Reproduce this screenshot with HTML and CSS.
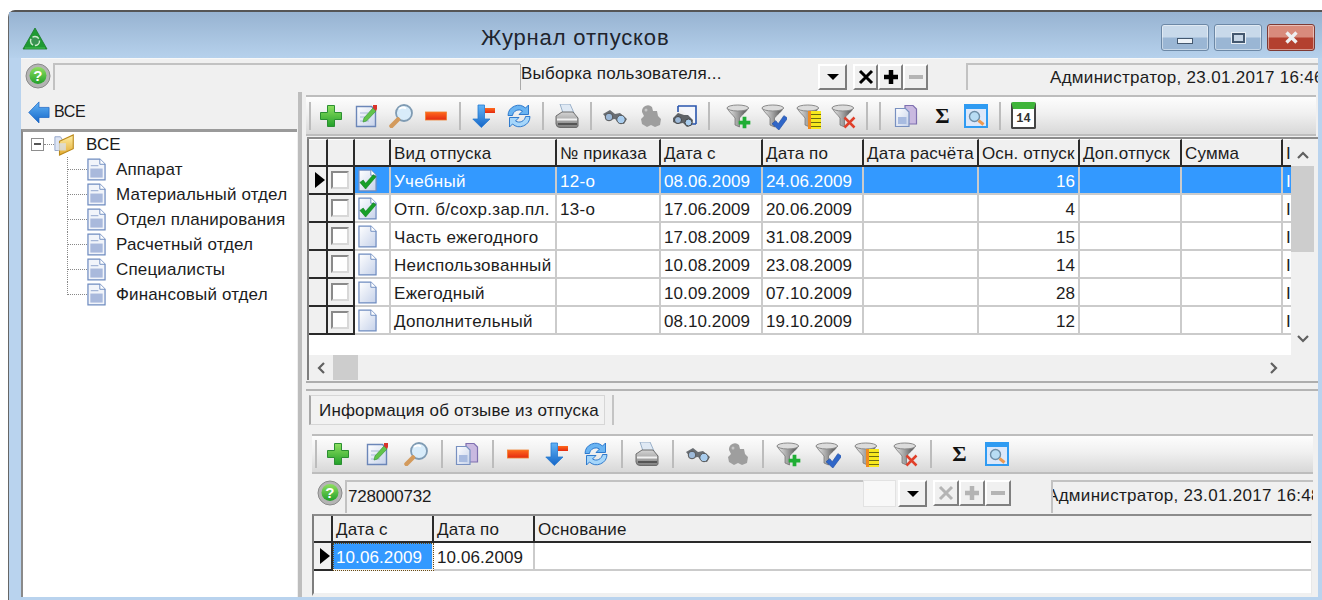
FILE: index.html
```html
<!DOCTYPE html>
<html lang="ru">
<head>
<meta charset="utf-8">
<title>Журнал отпусков</title>
<link rel="stylesheet" href="styles.css">
</head>
<body>
<svg class="sprite" width="0" height="0" aria-hidden="true">
  <defs>
    <linearGradient id="gGreen" x1="0" y1="0" x2="0" y2="1"><stop offset="0" stop-color="#8fe060"/><stop offset="1" stop-color="#22a02a"/></linearGradient>
    <linearGradient id="gRed" x1="0" y1="0" x2="0" y2="1"><stop offset="0" stop-color="#ff6a1c"/><stop offset="1" stop-color="#e32a10"/></linearGradient>
    <linearGradient id="gBlue" x1="0" y1="0" x2="0" y2="1"><stop offset="0" stop-color="#62b4f6"/><stop offset="1" stop-color="#1566c8"/></linearGradient>
    <linearGradient id="gDoc" x1="0" y1="0" x2="1" y2="1"><stop offset="0" stop-color="#ffffff"/><stop offset="1" stop-color="#c6d2ea"/></linearGradient>
    <linearGradient id="gFunnel" x1="0" y1="0" x2="1" y2="0"><stop offset="0" stop-color="#ececec"/><stop offset=".5" stop-color="#a0a0a0"/><stop offset="1" stop-color="#484848"/></linearGradient>
    <linearGradient id="gFolder" x1="0" y1="0" x2="0" y2="1"><stop offset="0" stop-color="#fff0a8"/><stop offset="1" stop-color="#e3aa30"/></linearGradient>
    <linearGradient id="gPrint" x1="0" y1="0" x2="0" y2="1"><stop offset="0" stop-color="#d6d6d6"/><stop offset="1" stop-color="#7e7e7e"/></linearGradient>

    <symbol id="i-plus" viewBox="0 0 24 24"><path d="M8.500 1.500h7v7h7v7h-7v7h-7v-7h-7v-7h7z" fill="url(#gGreen)" stroke="#2b8f32"/></symbol>
    <symbol id="i-edit" viewBox="0 0 24 24"><path d="M2.500 2.500h15l4 4v16h-19z" fill="url(#gDoc)" stroke="#6b86b8" stroke-width="1.400"/><path d="M6 9h8M6 13h5M6 17h9" stroke="#a9b9d8"/><path d="M9 18l1-4L19 4l3 3-9.500 10z" fill="#62c44a" stroke="#3b9a3a" stroke-width=".7"/><path d="M19 1h4v4l-1 2-3-3z" fill="#d9342a"/></symbol>
    <symbol id="i-find" viewBox="0 0 24 24"><circle cx="15" cy="9" r="8" fill="#d8ecfa" stroke="#7f9bb3" stroke-width="1.800"/><path d="M10 5a6 6 0 0 1 7-.5" stroke="#fff" stroke-width="2" fill="none"/><path d="M9 15.500L2.500 22" stroke="#d39a5c" stroke-width="4.500" stroke-linecap="round"/></symbol>
    <symbol id="i-minus" viewBox="0 0 24 24"><rect x="1.500" y="8" width="21" height="8" fill="url(#gRed)" stroke="#f08030" stroke-width=".8"/></symbol>
    <symbol id="i-down" viewBox="0 0 24 24"><path d="M6 1h6.500v14H18l-8.700 8.500L.8 15H6z" fill="url(#gBlue)" stroke="#2478d0" stroke-width=".8"/><rect x="13" y="4" width="10" height="5" fill="url(#gRed)"/></symbol>
    <symbol id="i-refresh" viewBox="0 0 24 24"><path d="M1 11.500A10.500 10.500 0 0 1 18.500 4l3-3v9.500H12l3.500-3.500a6.500 6.500 0 0 0-10 4.500z" fill="#6ab4f2" stroke="#1f6fc8" stroke-width=".9"/><path d="M23 12.500A10.500 10.500 0 0 1 5.500 20l-3 3v-9.500H12l-3.500 3.500a6.500 6.500 0 0 0 10-4.500z" fill="#a6d6fa" stroke="#1f6fc8" stroke-width=".9"/></symbol>
    <symbol id="i-print" viewBox="0 0 24 24"><path d="M5 0h10l4 9H8z" fill="#dfe9f4" stroke="#9ab0c8"/><path d="M1 12l6-4h11l5 6v7a2 2 0 0 1-2 2.500H5a4 4 0 0 1-4-3.500z" fill="url(#gPrint)" stroke="#6c6c6c"/><path d="M2 15.500h20" stroke="#f1f1f1" stroke-width="2"/><path d="M3 20h19" stroke="#4e4e4e" stroke-width="1.800"/></symbol>
    <symbol id="i-binoc" viewBox="0 0 24 24"><path d="M0 10l7-4 5 4 5-1 7 6-3 5-5-1-4-4-7 1z" fill="#6a6e73"/><circle cx="6" cy="13" r="3.800" fill="#9db9d8" stroke="#555"/><circle cx="18" cy="15.500" r="4.200" fill="#a9cdee" stroke="#555"/></symbol>
    <symbol id="i-puzzle" viewBox="0 0 24 24"><path d="M4 8a6 6 0 0 1 10-5l1 4h4l1 5 3 3-1 6-5 2-4-2-4 2-5-3-1-5 3-3z" fill="#9e9e9e"/><circle cx="8" cy="6" r="1.500" fill="#c6c6c6"/></symbol>
    <symbol id="i-binframe" viewBox="0 0 24 24"><path d="M5 2h18v18" fill="#f4f6fb" stroke="#2a55ad" stroke-width="1.600"/><path d="M5 2v6M23 20h-7" stroke="#2a55ad" stroke-width="1.600"/><path d="M0 14l5-5 6 2 4 0 5 5-1 5-5 2-4-4-6 1-4-2z" fill="#5f6367"/><circle cx="5" cy="16" r="3.500" fill="#9db9d8" stroke="#444"/><circle cx="15.500" cy="18.500" r="3.500" fill="#a9cdee" stroke="#444"/></symbol>
    <symbol id="i-funnel" viewBox="0 0 24 24"><path d="M1 4c2 4 6 7 8 10v7l4.500 2V14c2-3 7-6 9-10z" fill="url(#gFunnel)" stroke="#6c6c6c" stroke-width=".7"/><ellipse cx="11.800" cy="4" rx="10.800" ry="3" fill="#dcdcdc" stroke="#8a8a8a"/></symbol>
    <symbol id="i-copy" viewBox="0 0 24 24"><path d="M11 1.500h8l3.500 3.500v15H11z" fill="#c9b9e0" stroke="#7f70b0" stroke-width="1.200"/><path d="M1.500 4.500h10l3.500 3.500v14.500H1.500z" fill="url(#gDoc)" stroke="#7890c0" stroke-width="1.200"/><rect x="4" y="13" width="8.500" height="7" fill="#a8bbe0"/></symbol>
    <symbol id="i-view" viewBox="0 0 24 24"><rect x="1" y="1" width="22" height="22" fill="#dce8fa" stroke="#2f9bf2" stroke-width="2"/><rect x="1" y="1" width="22" height="4" fill="#2f9bf2"/><circle cx="10.500" cy="12.500" r="5" fill="#b8dcf4" stroke="#6e8ea8" stroke-width="1.400"/><path d="M14.500 16.500l5 4" stroke="#ee9a50" stroke-width="3"/></symbol>
    <symbol id="i-doc" viewBox="0 0 20 24"><path d="M1 1h12.500L19 6.500V23H1z" fill="url(#gDoc)" stroke="#6f8cc0" stroke-width="1.300"/><path d="M13.500 1v5.500H19" fill="#fff" stroke="#6f8cc0"/></symbol>
    <symbol id="i-docline" viewBox="0 0 20 24"><path d="M1 1h12.500L19 6.500V23H1z" fill="#f1f4fa" stroke="#6f8cc0" stroke-width="1.300"/><path d="M13.500 1v5.500H19" fill="#fff" stroke="#6f8cc0"/><path d="M4 8h8" stroke="#8ea3cc"/><rect x="3.500" y="11" width="13" height="9.500" fill="#a9b9dc"/></symbol>
    <symbol id="i-doccheck" viewBox="0 0 20 24"><use href="#i-doc" width="20" height="24"/><path d="M2 14l3.500-2.500L8 15l8-9 3 2-11 13z" fill="#18a028" stroke="#0c7a1c" stroke-width=".6"/></symbol>
    <symbol id="i-folder" viewBox="0 0 24 24"><path d="M1 3h6l2 3v12H1z" fill="#dfe6f4" stroke="#8ea3c8"/><path d="M6 8l15-7v15L6 23z" fill="url(#gFolder)" stroke="#bb8a1c" stroke-width="1.200"/><rect x="4" y="10" width="9" height="8" fill="#d8e0ee" opacity=".75"/></symbol>
    <symbol id="i-back" viewBox="0 0 24 24"><path d="M12 1v6h11v11H12v6L.8 12.500z" fill="url(#gBlue)" stroke="#1c66c4" stroke-width=".8"/></symbol>
    <symbol id="i-logo" viewBox="0 0 26 24"><path d="M13 1l12 21H1z" fill="#1f9a34" stroke="#1b7a2a" stroke-width=".8"/><circle cx="13" cy="14" r="4.500" fill="#3a9452" stroke="#cfeccf" stroke-width="1.400" stroke-dasharray="7 2"/><path d="M3 21h20" stroke="#46c052" stroke-width="1"/></symbol>
    <symbol id="i-help" viewBox="0 0 26 26"><circle cx="13" cy="13" r="12" fill="#b4b4b4" stroke="#8a8a8a"/><circle cx="13" cy="12.500" r="8.500" fill="url(#gGreen)"/><text x="13" y="18" text-anchor="middle" class="help-mark">?</text></symbol>
    <symbol id="i-x" viewBox="0 0 18 18"><path d="M3 3l12 12M15 3L3 15" stroke="currentColor" stroke-width="3"/></symbol>
    <symbol id="i-add" viewBox="0 0 18 18"><path d="M9 2v14M2 9h14" stroke="currentColor" stroke-width="4.500"/></symbol>
    <symbol id="i-sub" viewBox="0 0 18 18"><path d="M2 9h14" stroke="currentColor" stroke-width="4"/></symbol>
    <symbol id="i-check" viewBox="0 0 12 12"><path d="M0 7l3-2.500L5 7l4.500-6.500L12.500 2.500 5.500 12z" fill="#2f66c8" stroke="#1d4ca4" stroke-width=".5"/></symbol>
    <symbol id="i-row" viewBox="0 0 10 16"><path d="M0 0l10 8-10 8z" fill="#000"/></symbol>
  </defs>
</svg>

<div class="window">
  <header class="titlebar">
    <svg class="logo"><use href="#i-logo"/></svg>
    <h1 class="title">Журнал отпусков</h1>
    <div class="controls">
      <span class="ctl"><span class="ctl-min"></span></span>
      <span class="ctl"><span class="ctl-max"></span></span>
      <span class="ctl ctl-close"><svg class="ctl-x" viewBox="0 0 18 18"><path d="M3 3l12 12M15 3L3 15" stroke="#eef0f2" stroke-width="4"/></svg></span>
    </div>
  </header>

  <div class="status status-top">
    <svg class="help"><use href="#i-help"/></svg>
    <div class="field field-memo"></div>
    <div class="combo combo-top">
      <span class="combo-text">Выборка пользователя...</span>
      <span class="combo-btn"><span class="caret"></span></span>
    </div>
    <div class="btns">
      <span class="bevel"><svg class="bevel-ico"><use href="#i-x"/></svg></span>
      <span class="bevel"><svg class="bevel-ico"><use href="#i-add"/></svg></span>
      <span class="bevel off"><svg class="bevel-ico"><use href="#i-sub"/></svg></span>
    </div>
    <div class="field field-user"><span class="user-text">Администратор, 23.01.2017 16:46</span></div>
  </div>

  <div class="main">
    <aside class="left">
      <div class="crumb">
        <svg class="crumb-ico"><use href="#i-back"/></svg>
        <span>ВСЕ</span>
      </div>
      <div class="tree">
        <div class="tree-root">
          <span class="expander"></span>
          <span class="root-dash"></span>
          <svg class="folder"><use href="#i-folder"/></svg>
          <span>ВСЕ</span>
        </div>
        <ul class="tree-list">
          <li class="tree-item"><span class="conn"><span class="conn-h"></span></span><svg class="doc"><use href="#i-docline"/></svg><span>Аппарат</span></li>
          <li class="tree-item"><span class="conn"><span class="conn-h"></span></span><svg class="doc"><use href="#i-docline"/></svg><span>Материальный отдел</span></li>
          <li class="tree-item"><span class="conn"><span class="conn-h"></span></span><svg class="doc"><use href="#i-docline"/></svg><span>Отдел планирования</span></li>
          <li class="tree-item"><span class="conn"><span class="conn-h"></span></span><svg class="doc"><use href="#i-docline"/></svg><span>Расчетный отдел</span></li>
          <li class="tree-item"><span class="conn"><span class="conn-h"></span></span><svg class="doc"><use href="#i-docline"/></svg><span>Специалисты</span></li>
          <li class="tree-item"><span class="conn"><span class="conn-h"></span></span><svg class="doc"><use href="#i-docline"/></svg><span>Финансовый отдел</span></li>
        </ul>
      </div>
    </aside>

    <div class="splitter-v"></div>

    <section class="right">
      <div class="toolbar toolbar-top">
        <span class="sep sep-lead"></span>
        <span class="tb"><svg class="ico"><use href="#i-plus"/></svg></span>
        <span class="tb"><svg class="ico"><use href="#i-edit"/></svg></span>
        <span class="tb"><svg class="ico"><use href="#i-find"/></svg></span>
        <span class="tb"><svg class="ico"><use href="#i-minus"/></svg></span>
        <span class="sep"></span>
        <span class="tb"><svg class="ico"><use href="#i-down"/></svg></span>
        <span class="tb"><svg class="ico"><use href="#i-refresh"/></svg></span>
        <span class="sep"></span>
        <span class="tb"><svg class="ico"><use href="#i-print"/></svg></span>
        <span class="sep"></span>
        <span class="tb"><svg class="ico"><use href="#i-binoc"/></svg></span>
        <span class="tb"><svg class="ico"><use href="#i-puzzle"/></svg></span>
        <span class="tb"><svg class="ico"><use href="#i-binframe"/></svg></span>
        <span class="sep sep-wide"></span>
        <span class="tb"><span class="filter"><svg class="ico"><use href="#i-funnel"/></svg><svg class="badge"><use href="#i-add" class="badge-add"/></svg></span></span>
        <span class="tb"><span class="filter"><svg class="ico"><use href="#i-funnel"/></svg><svg class="badge"><use href="#i-check"/></svg></span></span>
        <span class="tb"><span class="filter"><svg class="ico"><use href="#i-funnel"/></svg><span class="badge-lv"></span></span></span>
        <span class="tb"><span class="filter"><svg class="ico"><use href="#i-funnel"/></svg><svg class="badge"><use href="#i-x" class="badge-del"/></svg></span></span>
        <span class="sep"></span>
        <span class="sep sep-second"></span>
        <span class="tb"><svg class="ico"><use href="#i-copy"/></svg></span>
        <span class="tb sigma">Σ</span>
        <span class="tb"><svg class="ico"><use href="#i-view"/></svg></span>
        <span class="sep"></span>
        <span class="tb">
          <span class="calendar"><span class="calendar-num">14</span></span>
        </span>
      </div>

      <div class="gridbox gridbox-top">
        <div class="grid-data">
          <table class="grid grid-main">
            <colgroup>
              <col class="c19"><col class="c27"><col class="c36"><col class="c166"><col class="c104"><col class="c102"><col class="c101"><col class="c115"><col class="c101"><col class="c102"><col class="c101"><col class="c12">
            </colgroup>
            <thead>
              <tr><th></th><th></th><th></th><th>Вид отпуска</th><th>№ приказа</th><th>Дата с</th><th>Дата по</th><th>Дата расчёта</th><th>Осн. отпуск</th><th>Доп.отпуск</th><th>Сумма</th><th class="tail">I</th></tr>
            </thead>
            <tbody>
              <tr class="sel">
                <td class="ind"><svg class="row-mark"><use href="#i-row"/></svg></td><td class="chk"><span class="box"></span></td>
                <td class="st"><svg class="st-ico"><use href="#i-doccheck"/></svg></td>
                <td>Учебный</td><td>12-о</td><td class="d">08.06.2009</td><td class="d">24.06.2009</td><td></td><td class="num">16</td><td></td><td></td><td class="tail">I</td>
              </tr>
              <tr>
                <td class="ind"></td><td class="chk"><span class="box"></span></td>
                <td class="st"><svg class="st-ico"><use href="#i-doccheck"/></svg></td>
                <td>Отп. б/сохр.зар.пл.</td><td>13-о</td><td class="d">17.06.2009</td><td class="d">20.06.2009</td><td></td><td class="num">4</td><td></td><td></td><td class="tail">I</td>
              </tr>
              <tr>
                <td class="ind"></td><td class="chk"><span class="box"></span></td>
                <td class="st"><svg class="st-ico"><use href="#i-doc"/></svg></td>
                <td>Часть ежегодного</td><td></td><td class="d">17.08.2009</td><td class="d">31.08.2009</td><td></td><td class="num">15</td><td></td><td></td><td class="tail">I</td>
              </tr>
              <tr>
                <td class="ind"></td><td class="chk"><span class="box"></span></td>
                <td class="st"><svg class="st-ico"><use href="#i-doc"/></svg></td>
                <td>Неиспользованный</td><td></td><td class="d">10.08.2009</td><td class="d">23.08.2009</td><td></td><td class="num">14</td><td></td><td></td><td class="tail">I</td>
              </tr>
              <tr>
                <td class="ind"></td><td class="chk"><span class="box"></span></td>
                <td class="st"><svg class="st-ico"><use href="#i-doc"/></svg></td>
                <td>Ежегодный</td><td></td><td class="d">10.09.2009</td><td class="d">07.10.2009</td><td></td><td class="num">28</td><td></td><td></td><td class="tail">I</td>
              </tr>
              <tr>
                <td class="ind"></td><td class="chk"><span class="box"></span></td>
                <td class="st"><svg class="st-ico"><use href="#i-doc"/></svg></td>
                <td>Дополнительный</td><td></td><td class="d">08.10.2009</td><td class="d">19.10.2009</td><td></td><td class="num">12</td><td></td><td></td><td class="tail">I</td>
              </tr>
            </tbody>
          </table>
        </div>
        <div class="vscroll">
          <svg class="sc-arrow" viewBox="0 0 12 8"><path d="M1 7l5-5 5 5" fill="none" stroke="#606060" stroke-width="2.200"/></svg>
          <span class="v-thumb"></span>
          <svg class="sc-arrow sc-end" viewBox="0 0 12 8"><path d="M1 1l5 5 5-5" fill="none" stroke="#606060" stroke-width="2.200"/></svg>
        </div>
        <div class="hscroll">
          <svg class="sc-side" viewBox="0 0 8 12"><path d="M7 1L2 6l5 5" fill="none" stroke="#606060" stroke-width="2.200"/></svg>
          <span class="h-thumb"></span>
          <svg class="sc-side sc-end-h" viewBox="0 0 8 12"><path d="M1 1l5 5-5 5" fill="none" stroke="#606060" stroke-width="2.200"/></svg>
        </div>
      </div>

      <div class="splitter-h"></div>

      <div class="tabs">
        <span class="tab">Информация об отзыве из отпуска</span>
        <span class="tab-end"></span>
      </div>

      <div class="toolbar toolbar-sub">
        <span class="sep sep-lead"></span>
        <span class="tb"><svg class="ico"><use href="#i-plus"/></svg></span>
        <span class="tb"><svg class="ico"><use href="#i-edit"/></svg></span>
        <span class="tb"><svg class="ico"><use href="#i-find"/></svg></span>
        <span class="sep"></span>
        <span class="tb"><svg class="ico"><use href="#i-copy"/></svg></span>
        <span class="sep"></span>
        <span class="tb"><svg class="ico"><use href="#i-minus"/></svg></span>
        <span class="tb"><svg class="ico"><use href="#i-down"/></svg></span>
        <span class="tb"><svg class="ico"><use href="#i-refresh"/></svg></span>
        <span class="sep"></span>
        <span class="tb"><svg class="ico"><use href="#i-print"/></svg></span>
        <span class="sep"></span>
        <span class="tb"><svg class="ico"><use href="#i-binoc"/></svg></span>
        <span class="tb"><svg class="ico"><use href="#i-puzzle"/></svg></span>
        <span class="sep"></span>
        <span class="tb"><span class="filter"><svg class="ico"><use href="#i-funnel"/></svg><svg class="badge"><use href="#i-add" class="badge-add"/></svg></span></span>
        <span class="tb"><span class="filter"><svg class="ico"><use href="#i-funnel"/></svg><svg class="badge"><use href="#i-check"/></svg></span></span>
        <span class="tb"><span class="filter"><svg class="ico"><use href="#i-funnel"/></svg><span class="badge-lv"></span></span></span>
        <span class="tb"><span class="filter"><svg class="ico"><use href="#i-funnel"/></svg><svg class="badge"><use href="#i-x" class="badge-del"/></svg></span></span>
        <span class="sep sep-last"></span>
        <span class="tb sigma">Σ</span>
        <span class="tb"><svg class="ico"><use href="#i-view"/></svg></span>
      </div>

      <div class="status status-sub">
        <svg class="help"><use href="#i-help"/></svg>
        <div class="field field-code">728000732</div>
        <div class="combo combo-sub">
          <span class="combo-blank"></span>
          <span class="combo-btn"><span class="caret"></span></span>
        </div>
        <div class="btns">
          <span class="bevel off"><svg class="bevel-ico"><use href="#i-x"/></svg></span>
          <span class="bevel off"><svg class="bevel-ico"><use href="#i-add"/></svg></span>
          <span class="bevel off"><svg class="bevel-ico"><use href="#i-sub"/></svg></span>
        </div>
        <div class="field field-user2"><span class="user-text">Администратор, 23.01.2017 16:48</span></div>
      </div>

      <div class="gridbox-sub">
        <table class="grid grid-detail">
          <colgroup><col class="c19"><col class="c101"><col class="c101"><col class="c776"></colgroup>
          <thead><tr><th></th><th>Дата с</th><th>Дата по</th><th>Основание</th></tr></thead>
          <tbody>
            <tr><td class="ind"><svg class="row-mark"><use href="#i-row"/></svg></td><td class="focus d">10.06.2009</td><td class="d">10.06.2009</td><td></td></tr>
          </tbody>
        </table>
      </div>
    </section>
  </div>
</div>
</body>
</html>
```

FILE: styles.css
```css
* { box-sizing: border-box; }

html, body {
  margin: 0;
  height: 600px;
  overflow: hidden;
  background: #fff;
}

body {
  font-family: "Liberation Sans", Arial, sans-serif;
  font-size: 17px;
  letter-spacing: .3px;
  color: #1c1c1c;
}

.sprite { position: absolute; }

/* Window frame */
.window {
  display: flex;
  flex-direction: column;
  width: 1314px;
  height: 590px;
  margin: 10px 0 0 8px;
  padding: 0 4px 3px 12px;
  background: #b9d3ee;
  border-top: 2px solid #555;
  border-left: 1px solid #666;
  border-top-left-radius: 7px;
}

.titlebar {
  display: flex;
  align-items: center;
  flex: none;
  height: 46px;
  margin: 0 -4px 0 -12px;
  padding: 5px 7px 0 13px;
  background: linear-gradient(#97b3d1, #b6d1ec);
}

.logo { width: 26px; height: 24px; flex: none; margin-top: 2px; }

.title {
  margin: 0 0 0 433px;
  font-size: 22px;
  font-weight: 400;
  letter-spacing: .85px;
  color: #20242c;
}

.controls { display: flex; gap: 5px; margin-left: auto; }

.ctl {
  display: flex;
  align-items: center;
  justify-content: center;
  width: 48px;
  height: 27px;
  border: 1px solid #6c88a6;
  border-radius: 3px;
  background: linear-gradient(#c8d9ea 0 48%, #9ab6d4 52% 100%);
  box-shadow: inset 0 0 0 1px rgba(255, 255, 255, .45);
}

.ctl-min { width: 16px; height: 6px; margin-top: 7px; background: #eef3f8; border: 1px solid #44586f; }
.ctl-max { width: 13px; height: 10px; background: #c7d6e6; border: 2px solid #44586f; outline: 1px solid #e8eff6; }
.ctl-close { background: linear-gradient(#d88b7c 0 48%, #b3402f 52% 100%); border-color: #7e3a34; }
.ctl-x { width: 19px; height: 15px; }

/* Status strips */
.status { display: flex; flex: none; background: #f0f0f0; }

.status-top { height: 34px; padding: 4px 0 2px 4px; border-top: 1px solid #f8f8f8; }
.status-sub { height: 40px; padding: 6px 0 1px 10px; margin-right: 5px; margin-left: 1px; }

.help { width: 26px; height: 26px; flex: none; }
.help-mark { font: 700 15px "Liberation Sans", sans-serif; fill: #fff; }

.field { border-top: 2px solid #c2c2c2; border-left: 2px solid #c2c2c2; white-space: nowrap; overflow: hidden; }

.field-memo { width: 467px; margin-left: 2px; }
.field-code { width: 518px; margin-left: 2px; padding: 5px 0 0 1px; letter-spacing: -.2px; }

.combo { display: flex; flex: none; }
.combo-top { width: 327px; height: 26px; margin-top: 1px; }
.combo-sub { width: 64px; height: 27px; }

.combo-text { flex: 1; padding-left: 0; border-left: 1px solid #aaa; letter-spacing: .2px; line-height: 20px; }
.combo-blank { flex: 1; background: #f8f8f8; margin-right: 2px; border: 1px solid #e2e2e2; }

.combo-btn {
  display: flex;
  align-items: center;
  justify-content: center;
  width: 29px;
  border-top: 2px solid #fff;
  border-left: 2px solid #fff;
  border-right: 2px solid #7c7c7c;
  border-bottom: 2px solid #7c7c7c;
  background: #f0f0f0;
}

.caret { border: 6px solid transparent; border-top: 6px solid #000; border-bottom: 0; }

.btns { display: flex; flex: none; height: 26px; margin: 1px 0 0 6px; }
.status-sub .btns { margin-top: 0; }

.bevel {
  display: flex;
  align-items: center;
  justify-content: center;
  width: 25px;
  border-top: 2px solid #fff;
  border-left: 2px solid #fff;
  border-right: 2px solid #808080;
  border-bottom: 2px solid #808080;
  background: #f0f0f0;
  color: #000;
}

.status-sub .bevel { width: 26px; }
.bevel.off { color: #b4b4b4; }
.bevel-ico { width: 18px; height: 18px; }

.field-user { flex: 1; margin-left: 38px; padding: 3px 0 0 82px; }
.field-user2 { flex: 1; margin-left: 40px; padding-top: 4px; }

.user-text { display: block; }
.field-user2 .user-text { margin-left: -6px; }

/* Panels */
.main { display: flex; flex: 1; min-height: 0; background: #f0f0f0; }

.left { display: flex; flex-direction: column; width: 276px; flex: none; }

.crumb {
  display: flex;
  align-items: center;
  gap: 4px;
  flex: none;
  height: 37px;
  padding: 2px 0 0 7px;
  font-size: 16px;
  letter-spacing: -.3px;
}

.crumb-ico { width: 22px; height: 22px; flex: none; }

.tree {
  flex: 1;
  padding: 0 0 0 8px;
  background: #fff;
  border-top: 3px solid #9a9a9a;
  border-left: 2px solid #8a8a8a;
  letter-spacing: .15px;
}

.tree-root { display: flex; align-items: center; height: 25px; }

.expander {
  position: relative;
  width: 13px;
  height: 13px;
  flex: none;
  border: 1px solid #8e8e8e;
}

.expander::after {
  content: "";
  position: absolute;
  top: 4px;
  left: 2px;
  width: 7px;
  height: 2px;
  background: #555;
}

.root-dash { width: 10px; flex: none; border-top: 1px dotted #888; }
.folder { width: 22px; height: 24px; flex: none; margin-right: 10px; }

.tree-list { margin: 0; padding: 0 0 0 36px; list-style: none; }

.tree-item { display: flex; height: 25px; align-items: center; }

.conn { align-self: stretch; width: 20px; flex: none; border-left: 1px dotted #888; }
.tree-item:last-child .conn { align-self: flex-start; height: 13px; }
.conn-h { display: block; height: 13px; border-bottom: 1px dotted #888; }

.doc { width: 19px; height: 23px; flex: none; margin-right: 10px; }

.splitter-v { width: 9px; flex: none; border-left: 4px solid #bdbdbd; margin-left: 1px; }

.right { display: flex; flex-direction: column; flex: 1; min-width: 0; padding-top: 3px; margin-left: -1px; }

/* Toolbars */
.toolbar {
  display: flex;
  align-items: center;
  flex: none;
  background: linear-gradient(#fdfdfd, #f0f0f0 45%, #d8d8d8);
  border-top: 2px solid #bdbdbd;
  border-bottom: 2px solid #bdbdbd;
}

.toolbar-top { height: 41px; margin-right: 2px; }
.toolbar-sub { height: 40px; margin: 0 5px 0 6px; }

.tb { display: flex; align-items: center; justify-content: center; flex: none; width: 35px; }
.toolbar-sub .tb { width: 39px; }

.ico { display: block; width: 24px; height: 24px; }

.sep { position: relative; width: 13px; height: 28px; flex: none; }
.sep::after {
  content: "";
  position: absolute;
  left: 6px;
  top: 0;
  width: 2px;
  height: 28px;
  background: #bcbcbc;
}

.sep-lead { width: 7px; }
.sep-lead::after { left: 3px; }
.sep-wide { width: 18px; }
.sep-second { width: 15px; }
.toolbar-sub .sep { width: 12px; }
.toolbar-sub .sep-lead { width: 6px; }
.toolbar-sub .sep-last { width: 14px; }

.sigma { padding-left: 4px; font: 700 22px "Liberation Serif", serif; color: #111; }

.filter { position: relative; display: block; width: 24px; height: 24px; }
.badge { position: absolute; right: -2px; bottom: -2px; width: 15px; height: 15px; }
.badge-add { color: #1fae34; }
.badge-del { color: #e0402a; }
.badge-lv {
  position: absolute;
  right: -1px;
  bottom: -1px;
  width: 13px;
  height: 18px;
  background: repeating-linear-gradient(#f7e81e 0 3px, #6b6b10 3px 4px);
  border-left: 3px solid #f08a1e;
}

.calendar {
  display: flex;
  align-items: flex-end;
  justify-content: center;
  width: 25px;
  height: 27px;
  border: 2px solid #444;
  border-top: 7px solid #3fb43a;
  border-radius: 2px;
  background: #fff;
}

.calendar-num { font: 700 12px/15px "Liberation Mono", monospace; letter-spacing: 0; color: #333; }

/* Grids */
.gridbox {
  display: grid;
  grid-template-columns: 984px 26px;
  grid-template-rows: 216px 25px;
  flex: none;
  margin: 1px 0 0 1px;
  height: 243px;
  border-top: 2px solid #8c8c8c;
}

.grid-data { overflow: hidden; background: #fff; border-left: 2px solid #7e7e7e; }

.grid { border-collapse: separate; border-spacing: 0; table-layout: fixed; }
.grid-main { width: 982px; }
.grid-detail { width: 997px; }

.c12 { width: 12px; }
.c19 { width: 19px; }
.c27 { width: 27px; }
.c36 { width: 36px; }
.c101 { width: 101px; }
.c102 { width: 102px; }
.c104 { width: 104px; }
.c115 { width: 115px; }
.c166 { width: 166px; }
.c776 { width: 776px; }

.grid th {
  height: 28px;
  padding: 2px 3px 0;
  background: #f0f0f0;
  border-top: 1px solid #fff;
  border-right: 2px solid #2a2a2a;
  border-bottom: 2px solid #2a2a2a;
  font-weight: 400;
  letter-spacing: .15px;
  text-align: left;
  white-space: nowrap;
  overflow: hidden;
}

.grid td {
  height: 28px;
  padding: 3px 3px 0;
  background: #fff;
  border-right: 2px solid #cbcbcb;
  border-bottom: 2px solid #cbcbcb;
  white-space: nowrap;
  overflow: hidden;
}

.grid td.d { letter-spacing: .1px; }

.grid td.ind, .grid td.chk {
  padding: 0;
  background: #f0f0f0;
  border-right-color: #2a2a2a;
  border-bottom-color: #2a2a2a;
}

.grid td.num { padding-right: 3px; text-align: right; letter-spacing: .1px; }
.grid .tail { padding-left: 3px; border-right: 0; }

.grid tr.sel td:not(.ind):not(.chk) { background: #3399ff; color: #fff; }

.row-mark { display: block; width: 10px; height: 16px; margin-left: 6px; }

.box {
  display: block;
  width: 18px;
  height: 18px;
  margin-left: 3px;
  background: #fff;
  border-top: 2px solid #8a8a8a;
  border-left: 2px solid #8a8a8a;
  border-right: 2px solid #d8d8d8;
  border-bottom: 2px solid #d8d8d8;
}

.grid td.st { padding: 0; }
.st-ico { display: block; width: 19px; height: 23px; margin-left: 3px; }

.vscroll {
  display: flex;
  flex-direction: column;
  align-items: center;
  grid-row: 1 / 3;
  grid-column: 2;
  padding: 12px 3px 0 0;
  background: #f0f0f0;
}

.sc-arrow { width: 12px; height: 8px; flex: none; }
.sc-end { margin-top: 83px; }
.v-thumb { width: 23px; height: 86px; flex: none; margin-top: 7px; background: #cdcdcd; }

.hscroll {
  display: flex;
  align-items: center;
  padding-left: 8px;
  background: #f0f0f0;
  border-left: 2px solid #7e7e7e;
}

.sc-side { width: 8px; height: 12px; flex: none; }
.h-thumb { width: 25px; height: 25px; flex: none; margin-left: 8px; background: #cdcdcd; }
.sc-end-h { margin-left: 912px; }

.splitter-h {
  flex: none;
  height: 10px;
  margin-top: 1px;
  border-top: 2px solid #adadad;
  border-bottom: 2px solid #b4b4b4;
}

.tabs { display: flex; align-items: flex-start; flex: none; height: 43px; padding: 4px 0 0 3px; }

.tab {
  height: 30px;
  padding: 5px 5px 0 8px;
  border: 1px solid #d6d6d6;
  border-left: 2px solid #a8a8a8;
  background: #f2f2f2;
  letter-spacing: .16px;
  white-space: nowrap;
}

.tab-end { width: 2px; height: 30px; margin-left: 7px; background: #c4c4c4; }

.gridbox-sub {
  flex: 1;
  min-height: 0;
  margin: 0 6px 1px 6px;
  overflow: hidden;
  background: #fff;
  border-top: 2px solid #8c8c8c;
  border-left: 2px solid #7e7e7e;
  border-right: 1px solid #e8e8e8;
  border-bottom: 3px solid #f0f0f0;
}

.grid-detail th { height: 27px; border-top: 0; }
.grid-detail td { height: 28px; }
.grid-detail th:last-child { border-right: 0; }
.grid-detail td:last-child { border-right: 0; }

.grid td.focus {
  background: #3399ff;
  color: #fff;
  outline: 1px dotted #6a4a10;
  outline-offset: -1px;
  border-color: #f0f0f0;
}
```
